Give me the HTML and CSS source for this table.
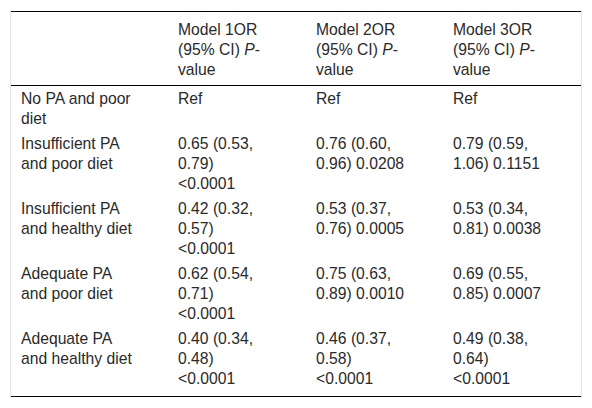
FILE: index.html
```
<!DOCTYPE html>
<html>
<head>
<meta charset="utf-8">
<link rel="stylesheet" href="styles.css">
</head>
<body>
<div class="wrap">
<table class="tbl">
<colgroup><col class="c1"><col class="c2"><col class="c3"><col class="c4"></colgroup>
<thead>
<tr><th></th><th>Model 1OR (95% CI) <i>P</i>-value</th><th>Model 2OR (95% CI) <i>P</i>-value</th><th>Model 3OR (95% CI) <i>P</i>-value</th></tr>
</thead>
<tbody>
<tr><td>No PA and poor diet</td><td>Ref</td><td>Ref</td><td>Ref</td></tr>
<tr><td>Insufficient PA and poor diet</td><td>0.65 (0.53, 0.79) &lt;0.0001</td><td>0.76 (0.60, 0.96) 0.0208</td><td>0.79 (0.59, 1.06) 0.1151</td></tr>
<tr><td>Insufficient PA and healthy diet</td><td>0.42 (0.32, 0.57) &lt;0.0001</td><td>0.53 (0.37, 0.76) 0.0005</td><td>0.53 (0.34, 0.81) 0.0038</td></tr>
<tr><td>Adequate PA and poor diet</td><td>0.62 (0.54, 0.71) &lt;0.0001</td><td>0.75 (0.63, 0.89) 0.0010</td><td>0.69 (0.55, 0.85) 0.0007</td></tr>
<tr class="last"><td>Adequate PA and healthy diet</td><td>0.40 (0.34, 0.48) &lt;0.0001</td><td>0.46 (0.37, 0.58) &lt;0.0001</td><td>0.49 (0.38, 0.64) &lt;0.0001</td></tr>
</tbody>
</table>
</div>
</body>
</html>
```
FILE: styles.css
```
html, body { margin: 0; padding: 0; background: #fff; }
body { font-family: "Liberation Sans", Arial, sans-serif; font-size: 15.7px; line-height: 20px; color: #2a2a2a; }
.wrap { margin: 10px; padding: 1px 0; border-left: 1px solid #e4e4e4; border-right: 1px solid #e4e4e4; }
.tbl { width: 570px; border-collapse: collapse; table-layout: fixed; border-top: 1px solid #000; border-bottom: 1px solid #000; }
.c1 { width: 157px; }
.c2 { width: 138px; }
.c3 { width: 137px; }
.c4 { width: 138px; }
.tbl th { font-weight: normal; text-align: left; vertical-align: top; padding: 8px 36px 5px 10px; border-bottom: 1px solid #000; }
.tbl th:first-child { padding-right: 27px; }
.tbl td { vertical-align: top; padding: 3px 36px 2px 10px; }
.tbl td:first-child { padding-right: 27px; }
.tbl .last td { padding-bottom: 7px; }
```
